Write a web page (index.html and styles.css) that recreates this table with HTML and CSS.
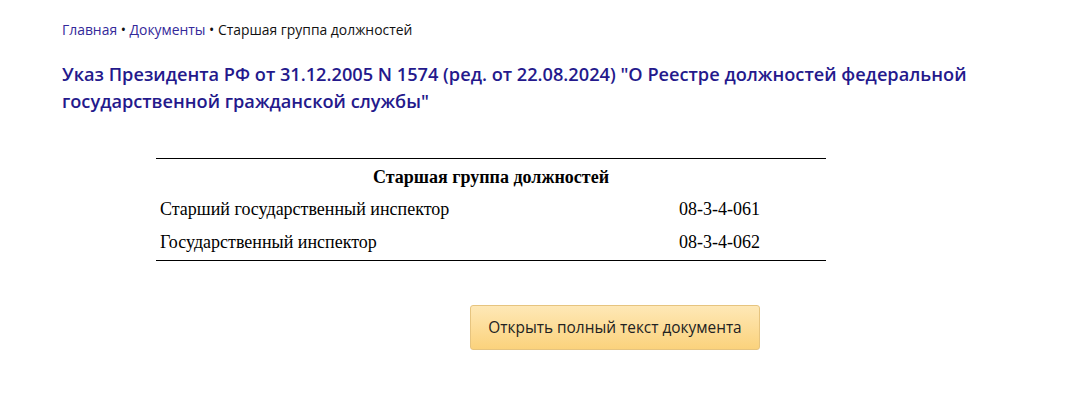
FILE: index.html
```html
<!DOCTYPE html>
<html lang="ru">
<head>
<meta charset="utf-8">
<link rel="stylesheet" href="styles.css">
</head>
<body>
<div class="page">
  <nav class="crumbs"><a href="#">Главная</a> • <a href="#">Документы</a> • <span>Старшая группа должностей</span></nav>
  <h1 class="title">Указ Президента РФ от 31.12.2005 N 1574 (ред. от 22.08.2024) "О Реестре должностей федеральной государственной гражданской службы"</h1>
  <div class="doc">
    <table class="tbl">
      <tr><th colspan="2">Старшая группа должностей</th></tr>
      <tr><td class="name">Старший государственный инспектор</td><td class="code">08-3-4-061</td></tr>
      <tr><td class="name">Государственный инспектор</td><td class="code">08-3-4-062</td></tr>
    </table>
  </div>
  <div class="actions"><button class="btn">Открыть полный текст документа</button></div>
</div>
</body>
</html>
```

FILE: styles.css
```css
html, body { margin: 0; padding: 0; background: #fff; }
.page { padding: 20px 62px 0 62px; font-family: "Open Sans", sans-serif; }
.crumbs { font-size: 13.9px; color: #111; line-height: 20px; }
.crumbs a { color: #33299a; text-decoration: none; }
.title { margin: 21px 0 0 0; font-size: 18.2px; line-height: 27px; font-weight: 600; color: #24198c; max-width: 930px; }
.doc { margin: 43px 0 0 94px; width: 670px; }
.tbl { width: 670px; border-collapse: collapse; font-family: "Liberation Serif", serif; font-size: 18px; line-height: 21px; color: #000; border-top: 1px solid #000; border-bottom: 1px solid #000; }
.tbl th { font-weight: bold; text-align: center; padding: 8px 4px 5px; }
.tbl td { padding: 6px 4px 6px; }
.tbl tr:last-child td { padding-bottom: 7px; }
.tbl td.code { width: 143px; }
.actions { margin: 44px 0 0 408px; }
.btn { width: 290px; height: 45px; border: 1px solid #e6c47f; border-radius: 3px; background: linear-gradient(#fee8b6, #fbd27c); font-family: "Open Sans", sans-serif; font-size: 15.4px; color: #222; cursor: pointer; }
```
